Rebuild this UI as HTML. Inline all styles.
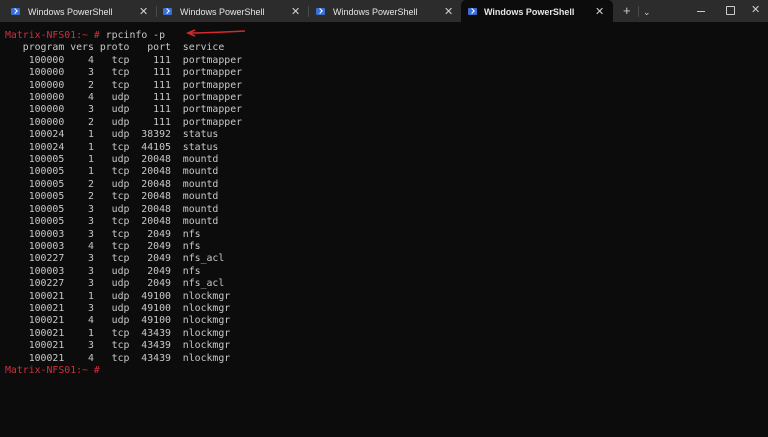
<!DOCTYPE html>
<html><head><style>
body{margin:0;width:768px;height:437px;background:#0c0c0c;overflow:hidden;font-family:"Liberation Sans",sans-serif;position:relative}
.bar{position:absolute;left:0;top:0;width:768px;height:22px;background:#2c2c2c}
.tab{position:absolute;top:0;height:22px;color:#e6e6e6;font-size:9px;line-height:24px}
.tab .ic{position:absolute;left:11px;top:8px;width:9px;height:7px;background:#3b6fd6;border-radius:1px}
.tab .ic:after{content:"";position:absolute;left:2px;top:1px;width:3px;height:3px;border-right:1px solid #fff;border-bottom:1px solid #fff;transform:rotate(-45deg)}
.tab .t{position:absolute;left:28px;white-space:nowrap}
.tab .x{position:absolute;color:#cfcfcf;font-size:11px}
.sep{position:absolute;top:6px;width:1px;height:11px;background:#4a4a4a}
.act{background:#0c0c0c;border-radius:5px 5px 0 0;font-weight:bold}
pre{position:absolute;left:5px;top:30px;margin:0;font-family:"DejaVu Sans Mono","Liberation Mono",monospace;font-size:9.85px;line-height:12.4px;color:#c8c8c8}
.r{color:#d0303d}
</style></head><body>
<div class="bar"></div>
<div class="tab" style="left:0;width:155px"><div class="ic"></div><span class="t">Windows PowerShell</span><span class="x" style="left:139px">✕</span></div>
<div class="sep" style="left:156px"></div>
<div class="tab" style="left:152px;width:155px"><div class="ic"></div><span class="t">Windows PowerShell</span><span class="x" style="left:139px">✕</span></div>
<div class="sep" style="left:308px"></div>
<div class="tab" style="left:305px;width:155px"><div class="ic"></div><span class="t">Windows PowerShell</span><span class="x" style="left:139px">✕</span></div>
<div class="tab act" style="left:461px;width:152px"><div class="ic" style="left:7px"></div><span class="t" style="left:23px">Windows PowerShell</span><span class="x" style="left:134px;font-weight:normal">✕</span></div>
<div class="tab" style="left:623px;font-size:13px;line-height:22px;color:#ccc">+</div>
<div class="sep" style="left:638px"></div>
<div class="tab" style="left:643px;font-size:9px;line-height:24px;color:#ccc">⌄</div>
<div style="position:absolute;left:697px;top:11px;width:8px;height:1px;background:#ccc"></div>
<div style="position:absolute;left:726px;top:6px;width:7px;height:7px;border:1px solid #ccc;border-radius:1px"></div>
<div class="tab" style="left:751px;font-size:11px;line-height:20px;color:#ccc">✕</div>
<svg style="position:absolute;left:0;top:0" width="768" height="60"><path d="M245 31 C225 32 205 33 189 33" stroke="#d42a2a" stroke-width="1.6" fill="none"/><path d="M195 30 L188 33 L195 36" stroke="#d42a2a" stroke-width="1.6" fill="none"/></svg>
<pre><span class="r">Matrix-NFS01:~ #</span> rpcinfo -p
   program vers proto   port  service
    100000    4   tcp    111  portmapper
    100000    3   tcp    111  portmapper
    100000    2   tcp    111  portmapper
    100000    4   udp    111  portmapper
    100000    3   udp    111  portmapper
    100000    2   udp    111  portmapper
    100024    1   udp  38392  status
    100024    1   tcp  44105  status
    100005    1   udp  20048  mountd
    100005    1   tcp  20048  mountd
    100005    2   udp  20048  mountd
    100005    2   tcp  20048  mountd
    100005    3   udp  20048  mountd
    100005    3   tcp  20048  mountd
    100003    3   tcp   2049  nfs
    100003    4   tcp   2049  nfs
    100227    3   tcp   2049  nfs_acl
    100003    3   udp   2049  nfs
    100227    3   udp   2049  nfs_acl
    100021    1   udp  49100  nlockmgr
    100021    3   udp  49100  nlockmgr
    100021    4   udp  49100  nlockmgr
    100021    1   tcp  43439  nlockmgr
    100021    3   tcp  43439  nlockmgr
    100021    4   tcp  43439  nlockmgr
<span class="r">Matrix-NFS01:~ #</span></pre>
</body></html>
